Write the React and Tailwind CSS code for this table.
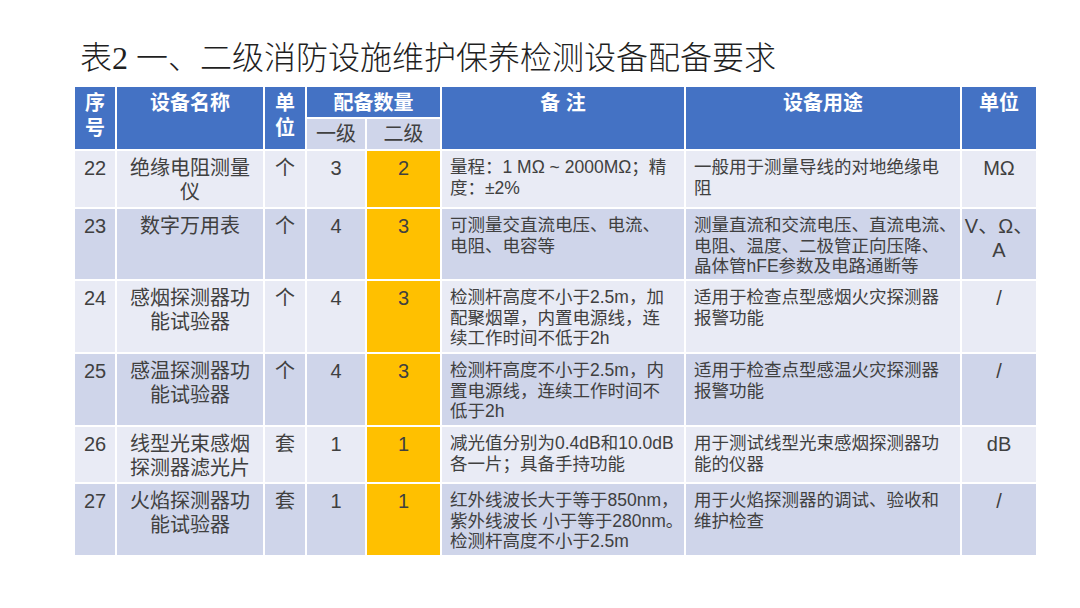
const FONT = { fontFamily: '"Liberation Sans", "Noto Sans CJK SC", sans-serif' };
const TITLE_FONT = { fontFamily: '"Liberation Serif", "Noto Sans CJK SC", serif' };

const rows = [
  {
    no: "22",
    name: "绝缘电阻测量仪",
    unit: "个",
    l1: "3",
    l2: "2",
    note: ["量程：1 MΩ ~ 2000MΩ；精", "度：±2%"],
    use: ["一般用于测量导线的对地绝缘电", "阻"],
    u: ["MΩ"],
  },
  {
    no: "23",
    name: "数字万用表",
    unit: "个",
    l1: "4",
    l2: "3",
    note: ["可测量交直流电压、电流、", "电阻、电容等"],
    use: ["测量直流和交流电压、直流电流、", "电阻、温度、二极管正向压降、", "晶体管hFE参数及电路通断等"],
    u: ["V、Ω、", "A"],
  },
  {
    no: "24",
    name: "感烟探测器功能试验器",
    unit: "个",
    l1: "4",
    l2: "3",
    note: ["检测杆高度不小于2.5m，加", "配聚烟罩，内置电源线，连", "续工作时间不低于2h"],
    use: ["适用于检查点型感烟火灾探测器", "报警功能"],
    u: ["/"],
  },
  {
    no: "25",
    name: "感温探测器功能试验器",
    unit: "个",
    l1: "4",
    l2: "3",
    note: ["检测杆高度不小于2.5m，内", "置电源线，连续工作时间不", "低于2h"],
    use: ["适用于检查点型感温火灾探测器", "报警功能"],
    u: ["/"],
  },
  {
    no: "26",
    name: "线型光束感烟探测器滤光片",
    unit: "套",
    l1: "1",
    l2: "1",
    note: ["减光值分别为0.4dB和10.0dB", "各一片；具备手持功能"],
    use: ["用于测试线型光束感烟探测器功", "能的仪器"],
    u: ["dB"],
  },
  {
    no: "27",
    name: "火焰探测器功能试验器",
    unit: "套",
    l1: "1",
    l2: "1",
    note: ["红外线波长大于等于850nm，", "紫外线波长 小于等于280nm。", "检测杆高度不小于2.5m"],
    use: ["用于火焰探测器的调试、验收和", "维护检查"],
    u: ["/"],
  },
];

const Lines = ({ lines }) =>
  lines.map((l, i) => (
    <div key={i} className="whitespace-nowrap">
      {l}
    </div>
  ));

const HeadCell = ({ children, className = "" }) => (
  <div className={`bg-[#4472c4] pt-[4px] text-center text-[20px] font-bold leading-[25px] text-white ${className}`}>
    {children}
  </div>
);

export default function App() {
  return (
    <div className="min-h-[608px] w-[1080px] bg-white" style={FONT}>
      <h1 className="pl-[80px] pt-[38px] text-[32px] font-light leading-[40px] text-[#1f1f1f]" style={TITLE_FONT}>
        表2 一、二级消防设施维护保养检测设备配备要求
      </h1>

      <div className="ml-[75px] mt-[9px] grid w-[961px] grid-cols-[40px_146px_40px_58px_73px_242px_274px_74px] grid-rows-[30px_30px_56px_70px_71px_71px_55px_71px] gap-[2px] bg-white text-[#404040]">
        <HeadCell className="row-span-2">
          序<br />号
        </HeadCell>
        <HeadCell className="row-span-2">设备名称</HeadCell>
        <HeadCell className="row-span-2">
          单<br />位
        </HeadCell>
        <HeadCell className="col-span-2">配备数量</HeadCell>
        <HeadCell className="row-span-2">备 注</HeadCell>
        <HeadCell className="row-span-2">设备用途</HeadCell>
        <HeadCell className="row-span-2">单位</HeadCell>
        <div className="bg-[#cfd5ea] pt-[3px] text-center text-[20px] leading-[25px] text-[#404040]">一级</div>
        <div className="bg-[#cfd5ea] pt-[3px] text-center text-[20px] leading-[25px] text-[#404040]">二级</div>

        {rows.map((r, i) => {
          const bg = i % 2 === 0 ? "bg-[#e9ebf5]" : "bg-[#cfd5ea]";
          const big = "pt-[5px] text-center text-[20px] leading-[24px]";
          const small = "px-[8px] pt-[6px] text-[17.5px] leading-[20.5px]";
          return [
            <div key={`${r.no}-a`} className={`${bg} ${big}`}>{r.no}</div>,
            <div key={`${r.no}-b`} className={`${bg} ${big} px-[6px]`}>{r.name}</div>,
            <div key={`${r.no}-c`} className={`${bg} ${big}`}>{r.unit}</div>,
            <div key={`${r.no}-d`} className={`${bg} ${big}`}>{r.l1}</div>,
            <div key={`${r.no}-e`} className={`bg-[#ffc000] ${big}`}>{r.l2}</div>,
            <div key={`${r.no}-f`} className={`${bg} ${small}`}>
              <Lines lines={r.note} />
            </div>,
            <div key={`${r.no}-g`} className={`${bg} ${small}`}>
              <Lines lines={r.use} />
            </div>,
            <div key={`${r.no}-h`} className={`${bg} ${big}`}>
              <Lines lines={r.u} />
            </div>,
          ];
        })}
      </div>
    </div>
  );
}
